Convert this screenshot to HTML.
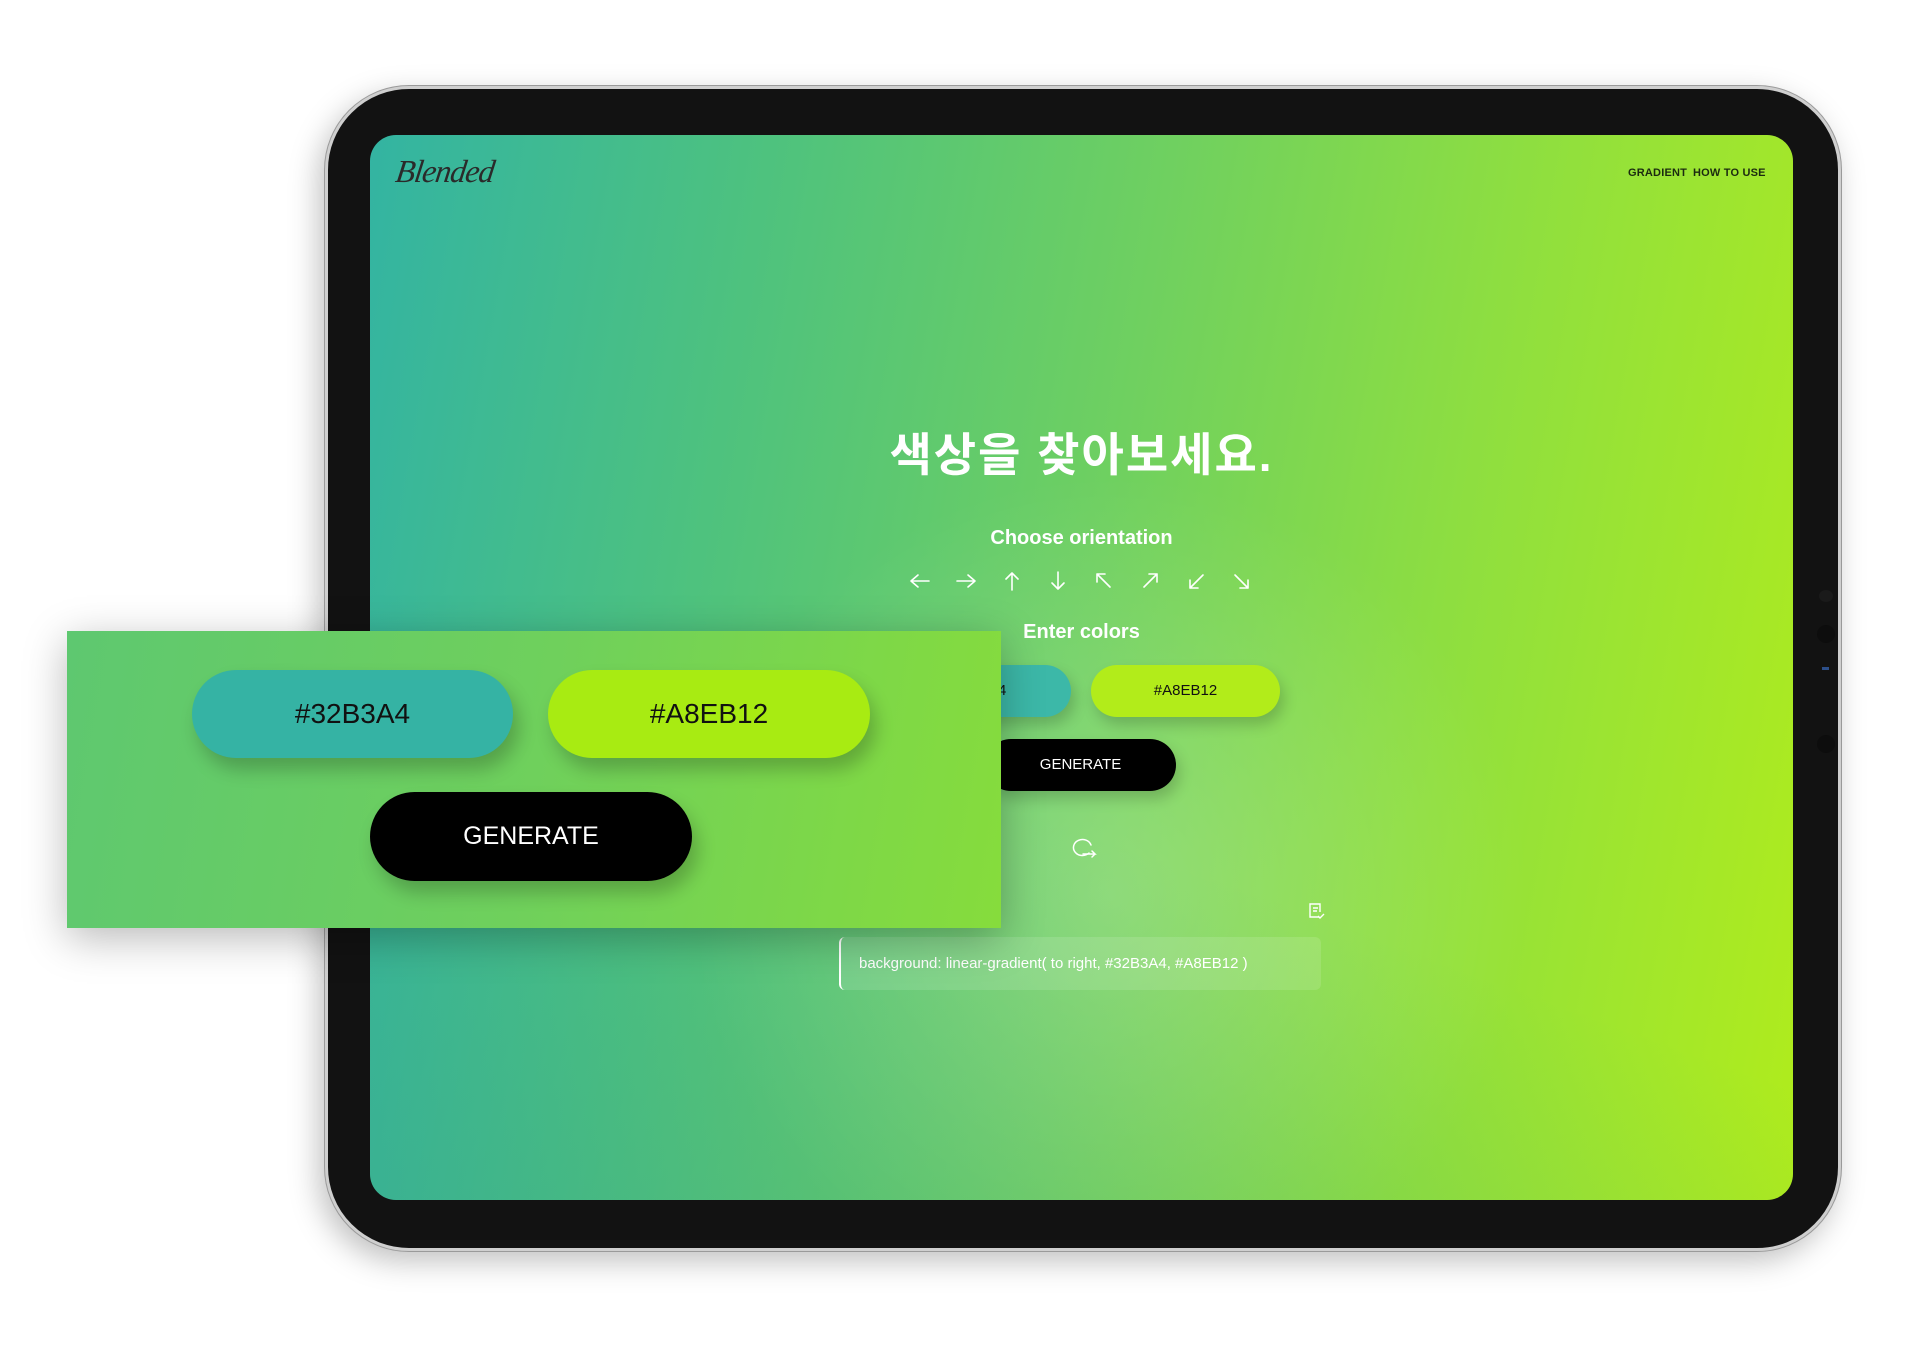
<!DOCTYPE html>
<html><head><meta charset="utf-8"><style>
*{margin:0;padding:0;box-sizing:border-box}
body{width:1920px;height:1369px;background:#fff;position:relative;overflow:hidden;font-family:"Liberation Sans","Noto Sans CJK KR",sans-serif}
.frame{position:absolute;left:325px;top:86px;width:1516px;height:1165px;border-radius:84px;background:#121212;border:3px solid #cfcfcf;box-shadow:0 0 0 1px #9a9a9a,-6px 10px 30px rgba(0,0,0,.25)}
.screen{position:absolute;left:370px;top:135px;width:1423px;height:1065px;border-radius:26px;overflow:hidden;
background:linear-gradient(100deg,#33b4a2 0%,#4ec27e 25%,#6fd060 50%,#92e03c 75%,#b0ec1c 100%)}
.glow{position:absolute;inset:0;background:radial-gradient(ellipse 420px 420px at 740px 760px,rgba(255,255,255,.2),rgba(255,255,255,0));}
.dark{position:absolute;inset:0;background:linear-gradient(200deg,rgba(0,0,0,0) 60%,rgba(40,150,150,.25) 100%)}
.logo{position:absolute;left:26px;top:18px;font-family:"Liberation Serif",serif;font-style:italic;font-size:32px;color:#2a2a2a;letter-spacing:-1px;transform:skewX(-8deg)}
.nav{position:absolute;top:32px;font-size:11px;font-weight:bold;color:#1b2a10;letter-spacing:.2px}
.c{position:absolute;left:0;width:1423px;text-align:center;color:#fff;font-weight:bold}
.pill{position:absolute;border-radius:30px;text-align:center;font-size:15px;line-height:52px;color:#111;box-shadow:4px 8px 14px rgba(0,0,0,.18)}
.card{position:absolute;left:67px;top:631px;width:934px;height:297px;background:linear-gradient(100deg,#5ec870,#6fd05c 50%,#86dc3c);box-shadow:0 10px 40px rgba(0,0,0,.28)}
.big{position:absolute;border-radius:46px;text-align:center;font-size:28px;color:#111;box-shadow:6px 12px 18px rgba(0,0,0,.22)}
</style></head><body>
<div class="frame"></div>
<div style="position:absolute;left:1819px;top:590px;width:14px;height:12px;border-radius:50%;background:#1a1a1a"></div>
<div style="position:absolute;left:1817px;top:625px;width:18px;height:18px;border-radius:50%;background:#0d0d0d"></div>
<div style="position:absolute;left:1822px;top:667px;width:7px;height:3px;background:#2c4f8a"></div>
<div style="position:absolute;left:1817px;top:735px;width:18px;height:18px;border-radius:50%;background:#0d0d0d"></div>
<div class="screen">
<div class="glow"></div><div class="dark"></div>
<div class="logo">Blended</div>
<div class="nav" style="left:1258px">GRADIENT</div>
<div class="nav" style="left:1323px">HOW TO USE</div>
<div class="c" style="top:284px;font-size:46px;letter-spacing:2px">색상을 찾아보세요.</div>
<div class="c" style="top:392px;font-size:20px">Choose orientation</div>
<svg style="position:absolute;left:536px;top:434px" width="360" height="24" fill="none" stroke="#fff" stroke-width="1.6" stroke-linecap="round" stroke-linejoin="round">
<g transform="translate(2,0)"><path d="M3 12h18M3 12l7-6M3 12l7 6"/></g>
<g transform="translate(48,0)"><path d="M3 12h18M21 12l-7-6M21 12l-7 6"/></g>
<g transform="translate(94,0)"><path d="M12 4v17M12 4l-6 6M12 4l6 6"/></g>
<g transform="translate(140,0)"><path d="M12 3v17M12 20l-6-6M12 20l6-6"/></g>
<g transform="translate(186,0)"><path d="M5 5l13 13M5 5h8M5 5v8"/></g>
<g transform="translate(232,0)"><path d="M19 5L6 18M19 5h-8M19 5v8"/></g>
<g transform="translate(278,0)"><path d="M19 6L6 19M6 19h8M6 19v-8"/></g>
<g transform="translate(324,0)"><path d="M5 6l13 13M18 19h-8M18 19v-8"/></g>
</svg>
<div class="c" style="top:486px;font-size:20px">Enter colors</div>
<div class="pill" style="left:510px;top:530px;width:191px;background:#3cb8a8">#32B3A4</div>
<div class="pill" style="left:721px;top:530px;width:189px;background:#b2ec1a">#A8EB12</div>
<div class="pill" style="left:615px;top:604px;width:191px;background:#000;color:#fff;font-size:15px">GENERATE</div>
<svg style="position:absolute;left:699px;top:698px" width="30" height="28" fill="none" stroke="#fff" stroke-width="1.5" stroke-linecap="round"><path d="M20 20A9 8 0 1 1 22 12"/><path d="M14 21h12l-3-3M26 21l-3 3"/></svg>
<svg style="position:absolute;left:937px;top:767px" width="20" height="20" fill="none" stroke="#fff" stroke-width="1.4"><path d="M12 15H3V2h10v8M6 6h5M6 9h4M11 14l2 2 4-4"/></svg>
<div style="position:absolute;left:474px;top:802px;width:482px;height:53px;border-left:2px solid #fff;border-radius:6px;background:rgba(255,255,255,.12);color:#fff;font-size:15px;line-height:53px;padding-left:18px;margin-left:-5px">background: linear-gradient( to right, #32B3A4, #A8EB12 )</div>
</div>
<div class="card">
<div class="big" style="left:125px;top:39px;width:321px;height:88px;line-height:88px;background:#35b3a4">#32B3A4</div>
<div class="big" style="left:481px;top:39px;width:322px;height:88px;line-height:88px;background:#a8eb12">#A8EB12</div>
<div class="big" style="left:303px;top:161px;width:322px;height:89px;line-height:89px;background:#000;color:#fff;font-size:25px">GENERATE</div>
</div>
</body></html>
